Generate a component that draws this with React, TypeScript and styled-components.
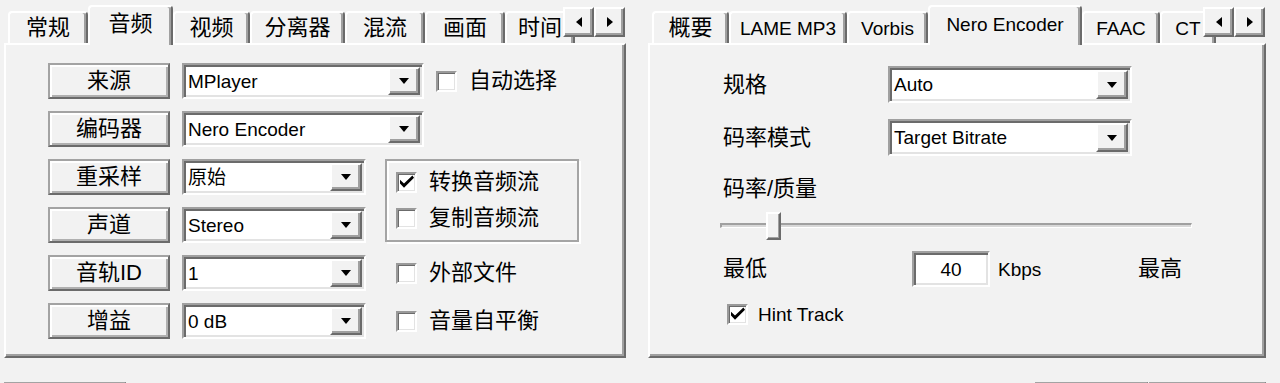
import React from 'react'
import styled, { createGlobalStyle } from 'styled-components'

const GlobalStyle = createGlobalStyle`
  html, body {
    margin: 0;
    padding: 0;
    background: #f2f2f2;
  }
  body {
    font-family: 'Liberation Sans', 'Noto Sans CJK SC', sans-serif;
    color: #000;
  }
`

const Page = styled.div`
  width: 1280px;
  height: 383px;
  overflow: hidden;
  background: #f2f2f2;
`

const Panels = styled.div`
  display: flex;
  gap: 22px;
  padding-left: 4px;
`

const Frame = styled.div<{ $width: number }>`
  position: relative;
  flex: none;
  width: ${p => p.$width}px;
  overflow: hidden;
`

const TabStrip = styled.div`
  position: relative;
  z-index: 1;
  display: flex;
  align-items: flex-end;
  height: 43px;
  padding-left: 4px;
`

const Tab = styled.div<{ $width: number; $active?: boolean; $latin?: boolean }>`
  position: relative;
  z-index: ${p => (p.$active ? 2 : 1)};
  flex: 0 0 ${p => p.$width}px;
  box-sizing: border-box;
  height: ${p => (p.$active ? 40 : 32)}px;
  margin-bottom: ${p => (p.$active ? -2 : 0)}px;
  padding-bottom: ${p => (p.$active ? 4 : 0)}px;
  background: #f2f2f2;
  border-top: 2px solid #fff;
  border-left: 2px solid #fff;
  border-right: 2px solid #6b6b6b;
  box-shadow: inset -2px 0 0 #a0a0a0;
  border-radius: 4px 4px 0 0;
  display: flex;
  align-items: center;
  justify-content: center;
  white-space: nowrap;
  font-size: ${p => (p.$latin ? 19 : 22)}px;
  line-height: 1;
`

const Scroller = styled.div`
  position: absolute;
  top: 7px;
  right: 1px;
  z-index: 3;
  display: flex;
`

const ScrollButton = styled.div`
  box-sizing: border-box;
  width: 31px;
  height: 30px;
  background: #f2f2f2;
  border-top: 2px solid #fff;
  border-left: 2px solid #fff;
  border-right: 2px solid #6b6b6b;
  border-bottom: 2px solid #6b6b6b;
  box-shadow: inset -2px -2px 0 #a0a0a0;
  display: flex;
  align-items: center;
  justify-content: center;
`

const Arrow = styled.span<{ $dir: 'left' | 'right' }>`
  width: 0;
  height: 0;
  border-top: 5px solid transparent;
  border-bottom: 5px solid transparent;
  ${p => (p.$dir === 'left' ? 'border-right: 6px solid #000;' : 'border-left: 6px solid #000;')}
`

const Body = styled.div<{ $pad: string }>`
  box-sizing: border-box;
  height: 315px;
  border-top: 2px solid #fff;
  border-left: 2px solid #fff;
  border-right: 2px solid #6b6b6b;
  border-bottom: 2px solid #6b6b6b;
  box-shadow: inset -2px -2px 0 #a0a0a0;
  padding: ${p => p.$pad};
  display: flex;
  flex-direction: column;
`

const Rows = styled.div`
  display: flex;
  flex-direction: column;
  gap: 12px;
`

const Row = styled.div`
  display: flex;
  align-items: center;
  gap: 12px;
`

const PushButton = styled.div<{ $width?: number }>`
  box-sizing: border-box;
  flex: none;
  width: ${p => p.$width ?? 122}px;
  height: 36px;
  background: #f2f2f2;
  border: 2px solid;
  border-color: #a3a3a3 #6b6b6b #6b6b6b #a3a3a3;
  box-shadow: inset 2px 2px 0 #fff, inset -2px -2px 0 #b0b0b0;
  display: flex;
  align-items: center;
  justify-content: center;
  font-size: 22px;
  line-height: 1;
`

const Sunken = styled.div<{ $width: number; $height?: number }>`
  box-sizing: border-box;
  flex: none;
  width: ${p => p.$width}px;
  height: ${p => p.$height ?? 36}px;
  background: #fff;
  border: 2px solid;
  border-color: #a0a0a0 #fff #fff #a0a0a0;
  box-shadow: inset 2px 2px 0 #6b6b6b, inset -2px -2px 0 #e3e3e3;
  padding: 2px;
  display: flex;
  align-items: stretch;
`

const FieldText = styled.span<{ $center?: boolean }>`
  flex: 1;
  display: flex;
  align-items: center;
  justify-content: ${p => (p.$center ? 'center' : 'flex-start')};
  padding-left: ${p => (p.$center ? 0 : 2)}px;
  font-size: 19px;
  line-height: 1;
  white-space: nowrap;
  overflow: hidden;
`

const DropButton = styled.span`
  box-sizing: border-box;
  flex: 0 0 32px;
  background: #f2f2f2;
  border-top: 2px solid #fff;
  border-left: 2px solid #fff;
  border-right: 2px solid #6b6b6b;
  border-bottom: 2px solid #6b6b6b;
  box-shadow: inset -2px -2px 0 #a0a0a0;
  display: flex;
  align-items: center;
  justify-content: center;
`

const DownArrow = styled.span`
  width: 0;
  height: 0;
  border-left: 5px solid transparent;
  border-right: 5px solid transparent;
  border-top: 6px solid #000;
`

const CheckItem = styled.div<{ $offset?: number; $latin?: boolean; $gap?: number }>`
  display: flex;
  align-items: center;
  gap: ${p => p.$gap ?? 12}px;
  margin-left: ${p => p.$offset ?? 0}px;
  height: 36px;
  font-size: ${p => (p.$latin ? 19 : 22)}px;
  line-height: 1;
  white-space: nowrap;
`

const Box = styled.span`
  box-sizing: border-box;
  flex: none;
  width: 21px;
  height: 21px;
  background: #fff;
  border: 2px solid;
  border-color: #9a9a9a #fff #fff #9a9a9a;
  box-shadow: inset 1px 1px 0 #6b6b6b, inset -1px -1px 0 #e3e3e3;
  display: flex;
  align-items: center;
  justify-content: center;
`

const GroupBox = styled.div`
  box-sizing: border-box;
  width: 194px;
  height: 83px;
  margin-left: 19px;
  align-self: flex-start;
  border: 2px solid #a5a5a5;
  box-shadow: inset 2px 2px 0 #fff, 2px 2px 0 #fff;
  padding: 3px 0 0 9px;
  display: flex;
  flex-direction: column;
`

const Block = styled.div`
  display: flex;
`

const Label = styled.div<{ $width?: number; $latin?: boolean; $indent?: number }>`
  flex: none;
  box-sizing: border-box;
  width: ${p => (p.$width ? `${p.$width}px` : 'auto')};
  padding-left: ${p => p.$indent ?? 0}px;
  font-size: ${p => (p.$latin ? 19 : 22)}px;
  line-height: 1;
  white-space: nowrap;
`

const Slider = styled.div`
  position: relative;
  width: 472px;
  height: 30px;
  margin-left: -3px;
  display: flex;
  align-items: center;
`

const Track = styled.div`
  box-sizing: border-box;
  flex: 1;
  height: 5px;
  margin-top: -3px;
  border-top: 2px solid #a0a0a0;
  border-left: 2px solid #a0a0a0;
  border-bottom: 1px solid #fff;
  border-right: 1px solid #fff;
  background: #d8d8d8;
`

const Thumb = styled.div`
  position: absolute;
  left: 46px;
  top: 0;
  box-sizing: border-box;
  width: 15px;
  height: 28px;
  background: #f2f2f2;
  border-top: 2px solid #fff;
  border-left: 2px solid #fff;
  border-right: 2px solid #6b6b6b;
  border-bottom: 2px solid #6b6b6b;
  box-shadow: inset -1px -1px 0 #a0a0a0;
`

const ButtonBar = styled.div`
  display: flex;
  justify-content: space-between;
  padding: 0 14px 0 4px;
  margin-top: 24px;
`

const ButtonGroup = styled.div`
  display: flex;
  gap: 1px;
`

const SpacedRow = styled(Row)<{ $top: number; $left?: number }>`
  gap: 0;
  margin-top: ${p => p.$top}px;
  margin-left: ${p => p.$left ?? 0}px;
`

const Check = () => (
  <svg width="14" height="14" viewBox="0 0 7 7">
    <polygon points="0,2.4 2,4.2 6.2,0.2 7,1.4 2,6.4 0,4.2" fill="#000" />
  </svg>
)

const CheckBox = ({ label, checked, offset, latin, gap }: { label: string; checked?: boolean; offset?: number; latin?: boolean; gap?: number }) => (
  <CheckItem $offset={offset} $latin={latin} $gap={gap}>
    <Box>{checked && <Check />}</Box>
    {label}
  </CheckItem>
)

const Combo = ({ value, width, height }: { value: string; width: number; height?: number }) => (
  <Sunken $width={width} $height={height}>
    <FieldText>{value}</FieldText>
    <DropButton>
      <DownArrow />
    </DropButton>
  </Sunken>
)

interface TabDef {
  label: string
  width: number
  active?: boolean
  latin?: boolean
}

const TabHeader = ({ tabs }: { tabs: TabDef[] }) => (
  <>
    <TabStrip>
      {tabs.map(t => (
        <Tab key={t.label} $width={t.width} $active={t.active} $latin={t.latin}>
          {t.label}
        </Tab>
      ))}
    </TabStrip>
    <Scroller>
      <ScrollButton>
        <Arrow $dir="left" />
      </ScrollButton>
      <ScrollButton>
        <Arrow $dir="right" />
      </ScrollButton>
    </Scroller>
  </>
)

const leftTabs: TabDef[] = [
  { label: '常规', width: 80 },
  { label: '音频', width: 85, active: true },
  { label: '视频', width: 77 },
  { label: '分离器', width: 95 },
  { label: '混流', width: 80 },
  { label: '画面', width: 80 },
  { label: '时间', width: 70 },
]

const rightTabs: TabDef[] = [
  { label: '概要', width: 77 },
  { label: 'LAME MP3', width: 118, latin: true },
  { label: 'Vorbis', width: 81, latin: true },
  { label: 'Nero Encoder', width: 154, active: true, latin: true },
  { label: 'FAAC', width: 78, latin: true },
  { label: 'CT', width: 56, latin: true },
]

const AudioPanel = () => (
  <Frame $width={622}>
    <TabHeader tabs={leftTabs} />
    <Body $pad="18px 0 0 42px">
      <Rows>
        <Row>
          <PushButton>来源</PushButton>
          <Combo value="MPlayer" width={242} />
          <CheckBox label="自动选择" />
        </Row>
        <Row>
          <PushButton>编码器</PushButton>
          <Combo value="Nero Encoder" width={242} />
        </Row>
        <Block>
          <Rows>
            <Row>
              <PushButton>重采样</PushButton>
              <Combo value="原始" width={184} />
            </Row>
            <Row>
              <PushButton>声道</PushButton>
              <Combo value="Stereo" width={184} />
            </Row>
          </Rows>
          <GroupBox>
            <CheckBox label="转换音频流" checked />
            <CheckBox label="复制音频流" />
          </GroupBox>
        </Block>
        <Row>
          <PushButton>音轨ID</PushButton>
          <Combo value="1" width={184} />
          <CheckBox label="外部文件" offset={18} />
        </Row>
        <Row>
          <PushButton>增益</PushButton>
          <Combo value="0 dB" width={184} />
          <CheckBox label="音量自平衡" offset={18} />
        </Row>
      </Rows>
    </Body>
  </Frame>
)

const EncoderPanel = () => (
  <Frame $width={618}>
    <TabHeader tabs={rightTabs} />
    <Body $pad="21px 0 0 73px">
      <SpacedRow $top={0}>
        <Label $width={165}>规格</Label>
        <Combo value="Auto" width={244} height={37} />
      </SpacedRow>
      <SpacedRow $top={16}>
        <Label $width={165}>码率模式</Label>
        <Combo value="Target Bitrate" width={244} height={37} />
      </SpacedRow>
      <SpacedRow $top={22}>
        <Label>码率/质量</Label>
      </SpacedRow>
      <SpacedRow $top={12}>
        <Slider>
          <Track />
          <Thumb />
        </Slider>
      </SpacedRow>
      <SpacedRow $top={9}>
        <Label $width={189}>最低</Label>
        <Sunken $width={78}>
          <FieldText $center>40</FieldText>
        </Sunken>
        <Label $width={148} $latin $indent={8}>
          Kbps
        </Label>
        <Label>最高</Label>
      </SpacedRow>
      <SpacedRow $top={9} $left={4}>
        <CheckBox label="Hint Track" checked latin gap={10} />
      </SpacedRow>
    </Body>
  </Frame>
)

const App = () => {
  return (
    <Page>
      <GlobalStyle />
      <Panels>
        <AudioPanel />
        <EncoderPanel />
      </Panels>
      <ButtonBar>
        <PushButton />
        <ButtonGroup>
          <PushButton $width={113} />
          <PushButton $width={117} />
        </ButtonGroup>
      </ButtonBar>
    </Page>
  )
}

export default App
